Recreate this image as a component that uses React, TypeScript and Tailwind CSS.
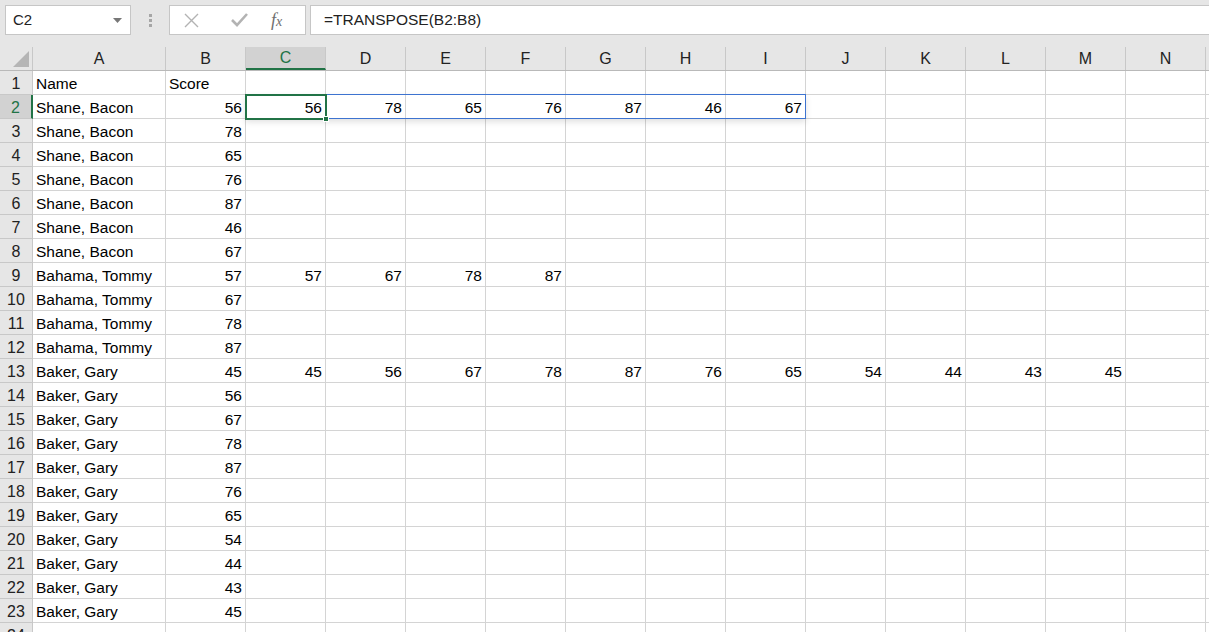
const COLS = ['A', 'B', 'C', 'D', 'E', 'F', 'G', 'H', 'I', 'J', 'K', 'L', 'M', 'N'];
const WIDTHS = [133, 80, 80, 80, 80, 80, 80, 80, 80, 80, 80, 80, 80, 80];

type Row = { name?: string; score?: number; spill?: number[] };

const rows: Row[] = [
  { name: 'Name' },
  { name: 'Shane, Bacon', score: 56, spill: [56, 78, 65, 76, 87, 46, 67] },
  { name: 'Shane, Bacon', score: 78 },
  { name: 'Shane, Bacon', score: 65 },
  { name: 'Shane, Bacon', score: 76 },
  { name: 'Shane, Bacon', score: 87 },
  { name: 'Shane, Bacon', score: 46 },
  { name: 'Shane, Bacon', score: 67 },
  { name: 'Bahama, Tommy', score: 57, spill: [57, 67, 78, 87] },
  { name: 'Bahama, Tommy', score: 67 },
  { name: 'Bahama, Tommy', score: 78 },
  { name: 'Bahama, Tommy', score: 87 },
  { name: 'Baker, Gary', score: 45, spill: [45, 56, 67, 78, 87, 76, 65, 54, 44, 43, 45] },
  { name: 'Baker, Gary', score: 56 },
  { name: 'Baker, Gary', score: 67 },
  { name: 'Baker, Gary', score: 78 },
  { name: 'Baker, Gary', score: 87 },
  { name: 'Baker, Gary', score: 76 },
  { name: 'Baker, Gary', score: 65 },
  { name: 'Baker, Gary', score: 54 },
  { name: 'Baker, Gary', score: 44 },
  { name: 'Baker, Gary', score: 43 },
  { name: 'Baker, Gary', score: 45 },
  {},
];

function FormulaBar() {
  return (
    <div className="flex h-[47px] items-start gap-0 bg-[#e6e6e6] pt-[5px]">
      <div className="ml-[5px] flex h-[30px] w-[126px] items-center justify-between border border-[#c6c6c6] bg-white pl-[7px] pr-[8px] text-[15px] text-[#222]">
        <span>C2</span>
        <svg width="9" height="5" viewBox="0 0 9 5">
          <path d="M0 0h9L4.5 5z" fill="#777" />
        </svg>
      </div>
      <div className="flex h-[30px] w-[38px] flex-col items-center justify-center gap-[2px]">
        <span className="h-[3px] w-[3px] bg-[#a6a6a6]" />
        <span className="h-[3px] w-[3px] bg-[#a6a6a6]" />
        <span className="h-[3px] w-[3px] bg-[#a6a6a6]" />
      </div>
      <div className="flex h-[30px] w-[137px] items-center border border-[#c6c6c6] bg-white">
        <svg className="ml-[14px]" width="15" height="15" viewBox="0 0 15 15">
          <path d="M1 1l13 13M14 1L1 14" stroke="#b3b3b3" strokeWidth="1.4" fill="none" />
        </svg>
        <svg className="ml-[32px]" width="17" height="14" viewBox="0 0 17 14">
          <path d="M1 7l5 5L16 1" stroke="#b3b3b3" strokeWidth="2.6" fill="none" />
        </svg>
        <span className="ml-[23px] font-['Liberation_Serif'] text-[18px] italic leading-none text-[#6f6f6f]">
          f<span className="text-[14px]">x</span>
        </span>
      </div>
      <div className="ml-[4px] flex h-[30px] flex-1 items-center border border-r-0 border-[#c6c6c6] bg-white pl-[13px] text-[15.5px] text-[#222]">
        =TRANSPOSE(B2:B8)
      </div>
    </div>
  );
}

function HeaderRow() {
  return (
    <div className="flex h-[24px] border-b border-[#b9b9b9] bg-[#e6e6e6]">
      <div className="relative w-[33px] shrink-0 border-r border-[#c8c8c8]">
        <svg className="absolute bottom-[3px] right-[3px]" width="16" height="16" viewBox="0 0 16 16">
          <path d="M16 0V16H0z" fill="#b5b5b5" />
        </svg>
      </div>
      {COLS.map((c, i) => (
        <div
          key={c}
          style={{ width: WIDTHS[i] }}
          className={
            c === 'C'
              ? 'flex shrink-0 items-center justify-center border-r border-b-2 border-r-[#c8c8c8] border-b-[#217346] bg-[#d2d2d2] pt-[1px] text-[16px] text-[#217346]'
              : 'flex shrink-0 items-center justify-center border-r border-[#c8c8c8] pt-[1px] text-[16px] text-[#222]'
          }
        >
          {c}
        </div>
      ))}
      <div className="flex-1" />
    </div>
  );
}

function DataRow({ row, index }: { row: Row; index: number }) {
  const n = index + 1;
  const active = n === 2;
  return (
    <div className="flex h-[24px] shrink-0">
      <div
        className={
          active
            ? 'flex w-[33px] shrink-0 items-center justify-center border-r-2 border-b border-r-[#217346] border-b-[#c8c8c8] bg-[#d2d2d2] pt-[2px] text-[16px] text-[#217346]'
            : 'flex w-[33px] shrink-0 items-center justify-center border-r border-b border-[#c8c8c8] bg-[#e6e6e6] pt-[2px] text-[16px] text-[#222]'
        }
      >
        {n}
      </div>
      {COLS.map((c, i) => {
        let content: string | number | undefined;
        let right = true;
        if (i === 0) {
          content = row.name;
          right = false;
        } else if (i === 1) {
          content = n === 1 ? 'Score' : row.score;
          right = n !== 1;
        } else if (row.spill) {
          content = row.spill[i - 2];
        }
        return (
          <div
            key={c}
            style={{ width: WIDTHS[i] }}
            className={
              right
                ? 'flex shrink-0 items-center justify-end border-r border-b border-[#d4d4d4] pt-[2px] pr-[3px] text-[15.5px] text-black'
                : 'flex shrink-0 items-center border-r border-b border-[#d4d4d4] pt-[2px] pl-[3px] text-[15.5px] text-black'
            }
          >
            {content}
          </div>
        );
      })}
      <div className="flex-1 border-b border-[#d4d4d4]" />
    </div>
  );
}

export default function App() {
  return (
    <div className="h-[632px] w-[1209px] overflow-hidden bg-white font-['Liberation_Sans',Arial,sans-serif]">
      <FormulaBar />
      <HeaderRow />
      <div className="relative flex flex-col">
        {rows.map((r, i) => (
          <DataRow key={i} row={r} index={i} />
        ))}
        {/* spill range outline C2:I2 */}
        <div className="pointer-events-none absolute left-[245px] top-[23px] h-[25px] w-[561px] border border-[#3d73d0] shadow-[0_3px_6px_rgba(0,0,0,0.12)]" />
        {/* active cell C2 */}
        <div className="pointer-events-none absolute left-[245px] top-[23px] h-[26px] w-[82px] border-2 border-[#217346]" />
        <div className="pointer-events-none absolute left-[323px] top-[45px] h-[6px] w-[6px] border border-white bg-[#217346]" />
      </div>
    </div>
  );
}
